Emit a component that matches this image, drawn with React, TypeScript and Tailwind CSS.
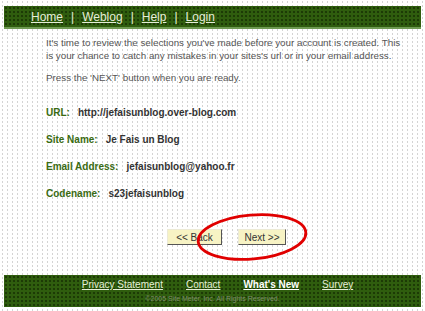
import React from "react";

export default function App() {
  const dots =
    "bg-white bg-[radial-gradient(circle,#d4d4d4_0.6px,transparent_0.9px)] bg-[length:5px_4px]";
  const greenBar =
    "bg-[#2f5d0e] bg-[radial-gradient(circle,#1c3a06_0.7px,transparent_1px)] bg-[length:4px_4px]";
  const btn =
    "h-[16px] flex items-center justify-center text-[10px] text-[#333] bg-[#f7f3c4] border border-t-[#ecead6] border-l-[#ecead6] border-r-[#555] border-b-[#555]";
  return (
    <div
      className={`w-[425px] h-[311px] overflow-hidden relative ${dots}`}
      style={{ fontFamily: '"Liberation Sans", Arial, sans-serif' }}
    >
      {/* Header */}
      <div className={`mx-[4px] mt-[6px] h-[23px] ${greenBar} border-b-2 border-[#6f9a52] flex items-center pl-[27px] text-[12px] text-[#e6eed8]`}>
        <span className="underline">Home</span>
        <span className="mx-[8px]">|</span>
        <span className="underline">Weblog</span>
        <span className="mx-[8px]">|</span>
        <span className="underline">Help</span>
        <span className="mx-[8px]">|</span>
        <span className="underline">Login</span>
      </div>

      {/* Body */}
      <div className="pl-[46px] pt-[7px] text-[9.8px] leading-[13px] text-[#555]">
        <p className="whitespace-nowrap">
          It's time to review the selections you've made before your account is created. This
          <br />
          is your chance to catch any mistakes in your sites's url or in your email address.
        </p>
        <p className="mt-[9px]">Press the 'NEXT' button when you are ready.</p>

        <div className="mt-[22px] flex flex-col gap-[14px] font-bold text-[10px] leading-[13px]">
          <div>
            <span className="text-[#3a6b12]">URL:</span>
            <span className="text-[#333] ml-[8px]">http://jefaisunblog.over-blog.com</span>
          </div>
          <div>
            <span className="text-[#3a6b12]">Site Name:</span>
            <span className="text-[#333] ml-[8px]">Je Fais un Blog</span>
          </div>
          <div>
            <span className="text-[#3a6b12]">Email Address:</span>
            <span className="text-[#333] ml-[8px]">jefaisunblog@yahoo.fr</span>
          </div>
          <div>
            <span className="text-[#3a6b12]">Codename:</span>
            <span className="text-[#333] ml-[8px]">s23jefaisunblog</span>
          </div>
        </div>
      </div>

      {/* Buttons */}
      <div className="mt-[29px] flex pl-[167px] gap-[16px]">
        <div className={`${btn} w-[55px]`}>&lt;&lt; Back</div>
        <div className={`${btn} w-[48px]`}>Next &gt;&gt;</div>
      </div>

      {/* Red ellipse annotation */}
      <svg className="absolute left-[190px] top-[208px]" width="124" height="58" viewBox="0 0 124 58">
        <ellipse cx="62" cy="29" rx="54" ry="22" fill="none" stroke="#e00000" strokeWidth="2.8" transform="rotate(-5 62 29)" />
      </svg>

      {/* Footer */}
      <div className={`absolute left-[4px] right-[4px] top-[275px] h-[32px] ${greenBar} flex flex-col items-center pt-[4px]`}>
        <div className="flex gap-[23px] text-[10px] leading-[12px] text-[#e6eed8] pl-[10px]">
          <span className="underline">Privacy Statement</span>
          <span className="underline">Contact</span>
          <span className="underline font-bold text-white">What's New</span>
          <span className="underline">Survey</span>
        </div>
        <div className="text-[7px] leading-[9px] mt-[3px] text-[#7e8d6a]">
          ©2005 Site Meter, Inc. All Rights Reserved.
        </div>
      </div>
    </div>
  );
}
